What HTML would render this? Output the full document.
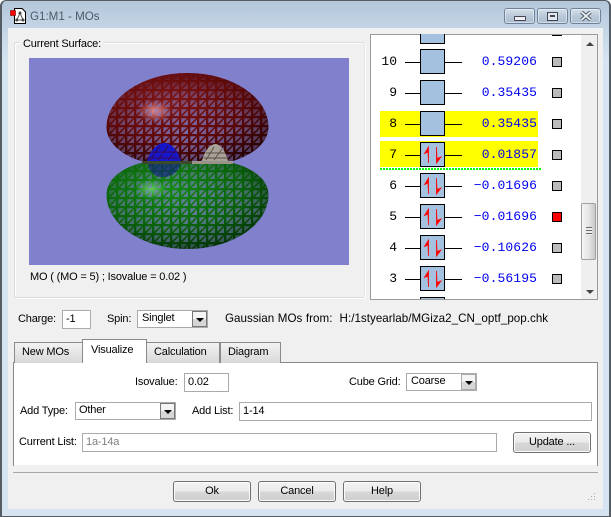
<!DOCTYPE html>
<html><head><meta charset="utf-8"><style>
html,body{margin:0;padding:0;width:611px;height:517px;overflow:hidden;background:#fff}
body{font:11px "Liberation Sans",sans-serif;letter-spacing:-.17px;color:#000;position:relative}
.a{position:absolute;white-space:nowrap}
.l{position:absolute;white-space:nowrap;line-height:14px}
.in{position:absolute;box-sizing:border-box;background:#fff;border:1px solid #aaa;padding-left:3px;white-space:nowrap;line-height:17px}
.cb{position:absolute;box-sizing:border-box;background:#fff;border:1px solid #aaa;padding-left:4px;line-height:13px;white-space:nowrap}
.ar{position:absolute;right:0;top:0;bottom:0;width:15px;box-sizing:border-box;border:1px solid #777;background:linear-gradient(#f4f4f4 50%,#d6d6d6 50%)}
.ar:after{content:"";position:absolute;left:3px;top:6px;border:4px solid transparent;border-top:4px solid #000;border-bottom:0}
.btn{position:absolute;box-sizing:border-box;border:1px solid #707070;border-radius:3px;background:linear-gradient(#f2f2f2 0,#ebebeb 48%,#d8d8d8 52%,#cfcfcf 100%);text-align:center;line-height:19px;box-shadow:inset 0 0 0 1px #fbfbfb}
.tab{position:absolute;box-sizing:border-box;border:1px solid #8a8a8a;border-bottom:0;background:linear-gradient(#f2f2f2,#d8d8d8);padding-left:7px;line-height:19px;white-space:nowrap}
.wb{position:absolute;top:8px;height:16px;box-sizing:border-box;border:1px solid #6f8299;border-radius:3px;background:linear-gradient(#d5e0ea,#b9c9d9 50%,#aebfd1);box-shadow:inset 0 0 0 1px rgba(255,255,255,.45)}
.n{position:absolute;font:13px/16px "Liberation Mono",monospace;letter-spacing:0;text-align:right;width:20px;left:377px}
.e{position:absolute;font:13px/16px "Liberation Mono",monospace;color:#0000f0;text-align:right;width:90px;left:447px;letter-spacing:.1px}
.bx{position:absolute;left:420px;width:25px;height:25px;box-sizing:border-box;border:1px solid #000;background:#a4c2e0}
.ln{position:absolute;left:405px;width:57px;height:1px;background:#000}
.sq{position:absolute;left:552px;width:10px;height:10px;box-sizing:border-box;border:1px solid #000;background:#bbb;margin-top:-1px}
.y{position:absolute;left:380px;width:158px;height:26px;background:#ff0}
</style></head><body>
<!-- frame -->
<div class="a" style="left:0;top:0;width:611px;height:517px;box-sizing:border-box;border:1px solid #555c63;border-width:1px 2px 1px 2px;border-radius:6px 6px 0 0;background:linear-gradient(#b3c7da 0,#c4d5e5 28px,#d6e4f1 60px,#d6e4f1 100%)"></div>
<div class="a" style="left:8px;top:28px;width:595px;height:481px;background:#f0f0f0;border-top:1px solid #eef2f6;box-sizing:border-box"></div>

<!-- title -->
<svg class="a" style="left:10px;top:8px" width="18" height="18" viewBox="0 0 18 18">
<path d="M4.500 .5H12L15.500 4V15.500H4.500Z" fill="#fff" stroke="#000"/>
<path d="M10 5L6.800 12M10 5L13 12M6.800 12H13" stroke="#555" fill="none"/>
<circle cx="10" cy="5" r="1.500" fill="#444"/><circle cx="6.800" cy="12" r="1.500" fill="#444"/><circle cx="13" cy="12" r="1.500" fill="#444"/>
<rect x=".5" y="2.500" width="5" height="5" fill="#f00" stroke="#700" stroke-width=".6"/>
</svg>
<div class="l" style="left:30px;top:10px;font-size:11.600px;letter-spacing:0;color:#4c5a6b">G1:M1 - MOs</div>
<div class="wb" style="left:504px;width:31px"><div class="a" style="left:9px;top:7px;width:10px;height:3px;border:1px solid #445;background:#eef1f4;border-radius:1px"></div></div>
<div class="wb" style="left:537px;width:31px"><div class="a" style="left:9px;top:3px;width:9px;height:7px;border:1px solid #445;background:#dfe7ef"></div><div class="a" style="left:12px;top:6px;width:5px;height:2px;background:#445"></div></div>
<div class="wb" style="left:570px;width:31px"><svg class="a" style="left:8px;top:1px" width="14" height="12"><path d="M2.500 2L11.500 10M11.500 2L2.500 10" stroke="#4a5460" stroke-width="3.600"/><path d="M2.500 2L11.500 10M11.500 2L2.500 10" stroke="#eef2f6" stroke-width="1.800"/></svg></div>

<!-- group box -->
<div class="a" style="left:14px;top:42px;width:351px;height:256px;box-sizing:border-box;border:1px solid #dcdcdc;border-right-color:#e6e6e6;box-shadow:inset 1px 1px 0 #fff,1px 1px 0 #fff;border-radius:2px"></div>
<div class="l" style="left:20px;top:37px;background:#f0f0f0;padding:0 3px 0 3px">Current Surface:</div>

<!-- GL view -->
<svg class="a" style="left:29px;top:58px" width="320" height="207" viewBox="29 58 320 207">
<defs>
<pattern id="m" width="9" height="9" patternUnits="userSpaceOnUse">
<path d="M1.300 1.300H7L1.300 6.800Z" fill="#8080cc"/>
<path d="M8 2.300V8H2.500Z" fill="#8080cc"/>
</pattern>
<radialGradient id="fr" cx=".5" cy=".66" r=".62"><stop offset="0" stop-color="#fff" stop-opacity=".8"/><stop offset=".6" stop-color="#fff" stop-opacity=".5"/><stop offset="1" stop-color="#fff" stop-opacity=".03"/></radialGradient>
<radialGradient id="fg" cx=".5" cy=".5" r=".56"><stop offset="0" stop-color="#fff" stop-opacity=".75"/><stop offset=".7" stop-color="#fff" stop-opacity=".5"/><stop offset="1" stop-color="#fff" stop-opacity=".05"/></radialGradient>
<mask id="mr" maskUnits="userSpaceOnUse" x="100" y="70" width="175" height="95"><rect x="100" y="70" width="175" height="95" fill="url(#fr)"/></mask>
<mask id="mg" maskUnits="userSpaceOnUse" x="100" y="160" width="175" height="92"><rect x="100" y="160" width="175" height="92" fill="url(#fg)"/></mask>
<radialGradient id="r" cx=".4" cy=".35" r=".75"><stop offset="0" stop-color="#821616"/><stop offset=".55" stop-color="#5c0808"/><stop offset="1" stop-color="#1e0203"/></radialGradient>
<radialGradient id="g" cx=".4" cy=".32" r=".75"><stop offset="0" stop-color="#148a14"/><stop offset=".55" stop-color="#0a620a"/><stop offset="1" stop-color="#012201"/></radialGradient>
<clipPath id="cr"><path d="M106.500 127A81 54 0 0 1 268.500 127C268.500 143 252 155 233 161H141C122 155 106.500 143 106.500 127Z"/></clipPath>
<clipPath id="cg"><path d="M106.500 195C106.500 179 122 168 141 163H233C252 168 268.500 179 268.500 195A81 54 0 0 1 106.500 195Z"/></clipPath>
<radialGradient id="hr"><stop offset="0" stop-color="#f09a9a" stop-opacity=".9"/><stop offset="1" stop-color="#f09a9a" stop-opacity="0"/></radialGradient>
<radialGradient id="hg"><stop offset="0" stop-color="#6fd06f" stop-opacity=".9"/><stop offset="1" stop-color="#6fd06f" stop-opacity="0"/></radialGradient>
</defs>
<rect x="29" y="58" width="320" height="207" fill="#8080cc"/>
<g clip-path="url(#cr)"><rect x="100" y="70" width="175" height="95" fill="url(#r)"/><ellipse cx="155" cy="111" rx="17" ry="11" fill="url(#hr)"/><rect x="100" y="70" width="175" height="95" fill="url(#m)" mask="url(#mr)"/></g>
<g clip-path="url(#cg)"><rect x="100" y="160" width="175" height="92" fill="url(#g)"/><ellipse cx="151" cy="189" rx="16" ry="10" fill="url(#hg)"/><rect x="100" y="160" width="175" height="92" fill="url(#m)" mask="url(#mg)"/></g>
<path d="M147 161C151 149 158 143 164 143C172 143 178 151 181 161Z" fill="#1616cc"/>
<path d="M202 161C205 149 211 144 216 144C222 145 226 153 228 161Z" fill="#a8a298"/>
<path d="M148 164H181C177 173 170 178 160 177C152 175 149 170 148 164Z" fill="#101090" fill-opacity=".55"/>
<path d="M150 160L160 146M158 160L168 146M168 160L176 150M150 152H178M147 158H181" stroke="#3a0a50" stroke-width="1" fill="none"/>
<path d="M206 160L214 147M214 160L222 149M206 153H225M204 158H227" stroke="#5a5048" stroke-width="1" fill="none"/>
<rect x="142" y="161" width="50" height="3" fill="#3a4a2a"/>
<rect x="192" y="161" width="41" height="3" fill="#9a9488"/>
</svg>
<div class="l" style="left:30px;top:270px">MO ( (MO = 5) ; Isovalue = 0.02 )</div>

<!-- list -->
<div class="a" style="left:370px;top:34px;width:228px;height:266px;box-sizing:border-box;border:1px solid #9a9a9a;background:#fff"></div>
<div class="a" style="left:581px;top:35px;width:16px;height:264px;background:#efefef"></div>
<div class="a" style="left:586px;top:42px;border:4px solid transparent;border-bottom:4px solid #444;border-top:0"></div>
<div class="a" style="left:586px;top:290px;border:4px solid transparent;border-top:4px solid #444;border-bottom:0"></div>
<div class="a" style="left:581px;top:203px;width:15px;height:57px;box-sizing:border-box;border:1px solid #a0a0a0;border-radius:2px;background:linear-gradient(90deg,#f4f4f4,#e6e6e6 50%,#c8c8c8)"></div>
<div class="a" style="left:586px;top:227px;width:6px;height:8px;background:repeating-linear-gradient(#666 0,#666 1px,#eee 1px,#eee 3px)"></div>

<div class="y" style="top:111px"></div>
<div class="y" style="top:141px"></div>
<div class="a" style="left:380px;top:168px;width:161px;height:2px;background:repeating-linear-gradient(90deg,#0f0 0,#0f0 2px,#fff 2px,#fff 3px)"></div>

<div class="bx" style="top:34px;height:10px;border-top:0"></div>
<div class="a" style="left:552px;top:35px;width:10px;height:1px;background:#000"></div>

<div class="n" style="top:54px;">10</div><div class="ln" style="top:62px"></div><div class="bx" style="top:49px"></div><div class="e" style="top:54px">0.59206</div><div class="sq" style="top:58px"></div>
<div class="n" style="top:85px">9</div><div class="ln" style="top:93px"></div><div class="bx" style="top:80px"></div><div class="e" style="top:85px">0.35435</div><div class="sq" style="top:89px"></div>
<div class="n" style="top:116px">8</div><div class="ln" style="top:124px"></div><div class="bx" style="top:111px"></div><div class="e" style="top:116px">0.35435</div><div class="sq" style="top:120px"></div>
<div class="n" style="top:147px">7</div><div class="ln" style="top:155px"></div><div class="bx" style="top:142px"></div><div class="e" style="top:147px">0.01857</div><div class="sq" style="top:151px"></div>
<div class="n" style="top:178px">6</div><div class="ln" style="top:186px"></div><div class="bx" style="top:173px"></div><div class="e" style="top:178px">−0.01696</div><div class="sq" style="top:182px"></div>
<div class="n" style="top:209px">5</div><div class="ln" style="top:217px"></div><div class="bx" style="top:204px"></div><div class="e" style="top:209px">−0.01696</div><div class="sq" style="top:213px;background:#f00"></div>
<div class="n" style="top:240px">4</div><div class="ln" style="top:248px"></div><div class="bx" style="top:235px"></div><div class="e" style="top:240px">−0.10626</div><div class="sq" style="top:244px"></div>
<div class="n" style="top:271px">3</div><div class="ln" style="top:279px"></div><div class="bx" style="top:266px"></div><div class="e" style="top:271px">−0.56195</div><div class="sq" style="top:275px"></div>
<div class="bx" style="top:297px;height:2px;border-bottom:0"></div>

<svg class="a" style="left:420px;top:142px" width="25" height="150" viewBox="0 0 25 150">
<defs><g id="sp"><path d="M8.500 21V5L4.500 11.500L8 10Z" fill="#f00" stroke="#f00" stroke-width=".8"/><path d="M16.500 5V21L21 15L17 16.500Z" fill="#f00" stroke="#f00" stroke-width=".8"/></g></defs>
<use href="#sp" y="0"/><use href="#sp" y="31"/><use href="#sp" y="62"/><use href="#sp" y="93"/><use href="#sp" y="124"/>
</svg>

<!-- charge line -->
<div class="l" style="left:18px;top:312px">Charge:</div>
<div class="in" style="left:62px;top:310px;width:29px;height:19px">-1</div>
<div class="l" style="left:107px;top:312px">Spin:</div>
<div class="cb" style="left:137px;top:310px;width:71px;height:18px;padding-top:1px">Singlet<div class="ar"></div></div>
<div class="l" style="left:225px;top:312px;font-size:11.600px;letter-spacing:.03px;word-spacing:.3px">Gaussian MOs from:&nbsp; H:/1styearlab/MGiza2_CN_optf_pop.chk</div>

<!-- tabs -->
<div class="a" style="left:13px;top:362px;width:585px;height:104px;box-sizing:border-box;border:1px solid #8a8a8a;border-bottom:0;background:#fff"></div>
<div class="a" style="left:14px;top:465px;width:583px;height:1px;background:#f0f0f0"></div>
<div class="tab" style="left:14px;top:342px;width:69px;height:21px">New MOs</div>
<div class="tab" style="left:146px;top:342px;width:74px;height:21px">Calculation</div>
<div class="tab" style="left:220px;top:342px;width:61px;height:21px">Diagram</div>
<div class="tab" style="left:82px;top:339px;width:65px;height:24px;background:#fff;line-height:20px;padding-left:8px">Visualize</div>

<!-- visualize -->
<div class="l" style="left:135px;top:375px">Isovalue:</div>
<div class="in" style="left:184px;top:373px;width:45px;height:19px">0.02</div>
<div class="l" style="left:349px;top:375px">Cube Grid:</div>
<div class="cb" style="left:406px;top:373px;width:71px;height:18px;padding-top:1px">Coarse<div class="ar" style="border-color:#aaa"></div></div>
<div class="l" style="left:20px;top:404px">Add Type:</div>
<div class="cb" style="left:75px;top:402px;width:101px;height:18px;padding-left:3px;padding-top:1px">Other<div class="ar"></div></div>
<div class="l" style="left:192px;top:404px">Add List:</div>
<div class="in" style="left:239px;top:402px;width:353px;height:19px">1-14</div>
<div class="l" style="left:19px;top:435px">Current List:</div>
<div class="in" style="left:82px;top:433px;width:415px;height:19px;color:#808080">1a-14a</div>
<div class="btn" style="left:513px;top:432px;width:78px;height:21px">Update ...</div>

<!-- bottom -->
<div class="a" style="left:13px;top:472px;width:585px;height:1px;background:#a8a8a8"></div>
<div class="btn" style="left:173px;top:481px;width:78px;height:21px">Ok</div>
<div class="btn" style="left:258px;top:481px;width:78px;height:21px">Cancel</div>
<div class="btn" style="left:343px;top:481px;width:78px;height:21px">Help</div>
<svg class="a" style="left:587px;top:492px" width="10" height="10"><g fill="#aaa"><rect x="7" y="1" width="1" height="1"/><rect x="4" y="4" width="1" height="1"/><rect x="7" y="4" width="1" height="1"/><rect x="1" y="7" width="1" height="1"/><rect x="4" y="7" width="1" height="1"/><rect x="7" y="7" width="1" height="1"/></g></svg>
</body></html>
